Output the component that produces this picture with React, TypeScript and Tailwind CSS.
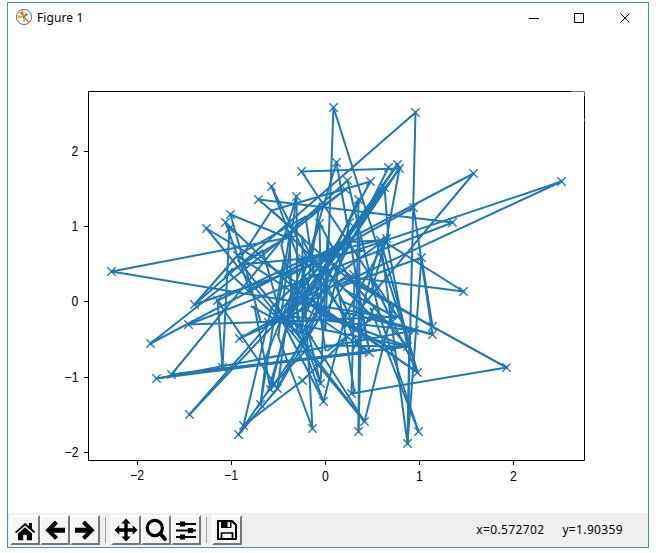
import type { ReactNode } from "react";

type Point = [number, number];
type Segment = [number, number, number, number];

const points: Point[] = [
  [333, 107], [415, 112], [336, 162], [301, 171], [388, 167], [397, 164], [399, 168],
  [473, 173], [561, 181], [347, 180], [370, 181], [271, 186], [384, 187], [258, 199],
  [296, 196], [358, 199], [345, 189], [413, 207], [452, 222], [206, 228], [230, 214],
  [225, 222], [229, 228], [111, 271], [463, 291], [421, 257], [194, 304], [188, 324],
  [150, 343], [156, 378], [171, 374], [189, 414], [238, 434], [243, 425], [222, 367],
  [239, 338], [260, 404], [270, 389], [277, 388], [302, 380], [312, 428], [323, 401],
  [320, 383], [351, 393], [358, 431], [364, 421], [407, 443], [418, 431], [417, 372],
  [407, 346], [369, 352], [361, 350], [432, 334], [432, 326], [506, 367], [414, 330],
  [289, 235], [319, 223], [349, 222], [237, 255], [228, 272], [217, 300], [386, 238],
  [380, 240], [349, 278], [394, 305], [397, 316], [373, 317], [308, 333], [241, 264],
  [353, 274], [334, 264], [282, 321], [291, 313], [345, 315], [302, 258], [268, 322],
];

const segments: Segment[] = [
  [333, 107, 325, 328], [333, 107, 417, 372],
  [415, 112, 194, 304], [415, 112, 407, 443],
  [336, 162, 268, 389], [336, 162, 369, 352],
  [301, 171, 399, 168], [301, 171, 397, 316],
  [388, 167, 277, 388], [397, 164, 302, 300], [397, 164, 321, 270], [399, 168, 291, 313],
  [399, 168, 386, 238], [399, 168, 304, 310],
  [473, 173, 150, 343], [473, 173, 345, 326],
  [561, 181, 194, 304], [561, 181, 337, 285],
  [347, 180, 282, 238], [347, 180, 380, 318], [370, 181, 271, 210], [370, 181, 300, 310],
  [345, 189, 150, 343], [345, 189, 295, 225],
  [271, 186, 308, 260], [271, 186, 325, 330], [384, 187, 388, 238], [384, 187, 282, 321],
  [258, 199, 452, 222], [258, 199, 302, 237], [296, 196, 278, 335], [296, 196, 297, 328],
  [358, 199, 302, 320], [358, 199, 356, 312], [271, 210, 241, 256],
  [271, 210, 345, 276], [413, 207, 282, 279], [413, 207, 432, 334],
  [452, 222, 188, 324], [206, 228, 308, 289], [206, 228, 364, 421],
  [230, 214, 289, 238], [230, 214, 260, 321], [225, 222, 321, 314],
  [225, 222, 249, 289], [229, 228, 222, 367], [217, 300, 222, 367],
  [111, 271, 294, 236], [111, 271, 395, 318], [463, 291, 382, 240],
  [463, 291, 345, 276], [421, 257, 340, 286], [421, 257, 407, 443], [421, 257, 432, 326],
  [194, 304, 237, 255], [188, 324, 337, 319], [156, 378, 407, 346], [156, 378, 414, 330],
  [171, 374, 407, 346], [171, 374, 285, 235], [171, 374, 369, 352],
  [189, 414, 321, 263], [189, 414, 304, 292],
  [238, 434, 270, 387], [238, 434, 277, 388], [243, 425, 302, 380], [302, 380, 345, 339],
  [243, 425, 271, 307], [270, 387, 310, 345],
  [239, 338, 305, 308], [239, 338, 345, 278], [217, 300, 277, 388],
  [217, 300, 302, 260], [260, 404, 283, 260], [260, 404, 266, 355],
  [270, 389, 254, 306], [270, 389, 308, 333], [277, 388, 321, 314],
  [312, 428, 302, 258], [312, 428, 277, 334], [323, 401, 282, 321],
  [323, 401, 345, 315], [320, 383, 327, 238], [320, 383, 308, 333],
  [351, 393, 354, 280], [351, 393, 506, 367],
  [358, 431, 359, 238], [358, 431, 361, 310], [364, 421, 282, 315],
  [364, 421, 393, 305], [418, 431, 380, 318], [418, 431, 370, 308],
  [407, 443, 409, 330], [407, 443, 380, 240], [417, 372, 380, 240],
  [417, 372, 345, 321], [417, 372, 308, 298], [407, 346, 282, 321],
  [407, 346, 349, 278], [369, 352, 308, 310], [369, 352, 361, 311],
  [361, 350, 302, 239], [432, 334, 345, 312], [432, 326, 349, 278],
  [506, 367, 345, 278], [432, 334, 373, 317],
  [386, 238, 302, 300], [380, 240, 337, 242], [386, 238, 345, 315],
  [241, 264, 315, 257], [241, 264, 302, 340], [237, 255, 305, 216],
  [289, 235, 325, 270], [319, 223, 291, 313], [305, 216, 325, 350],
  [349, 222, 327, 317], [228, 272, 262, 250], [228, 272, 282, 322],
  [302, 237, 302, 333], [345, 276, 282, 322], [337, 242, 282, 315],
  [289, 235, 292, 333], [334, 264, 302, 333],
  [296, 196, 281, 245], [281, 245, 302, 333], [289, 235, 275, 322],
  [241, 264, 289, 235], [237, 255, 330, 317], [249, 289, 334, 249],
  [302, 258, 386, 238], [319, 203, 301, 330],
  [319, 223, 321, 314], [397, 164, 312, 290], [384, 187, 335, 264],
  [271, 307, 323, 258], [268, 322, 397, 316], [282, 315, 414, 330],
  [302, 300, 394, 350], [325, 264, 354, 326], [325, 270, 373, 317],
  [334, 264, 394, 305], [291, 285, 345, 326], [277, 388, 289, 300],
  [266, 355, 305, 258], [270, 389, 296, 285], [308, 333, 364, 421],
  [302, 345, 327, 290], [352, 350, 373, 308], [380, 240, 357, 326],
  [386, 238, 407, 346], [349, 278, 308, 333], [325, 345, 407, 346],
  [251, 306, 302, 333], [315, 257, 364, 250],
  [371, 278, 417, 372], [345, 290, 394, 316], [320, 314, 407, 346],
  [291, 313, 323, 401], [334, 264, 354, 393], [302, 258, 345, 315],
  [327, 350, 373, 317], [319, 223, 349, 278], [262, 250, 282, 321],
  [298, 325, 320, 383], [386, 238, 371, 290], [340, 300, 380, 318],
];

function Plot() {
  const xTicks = [137, 231, 325, 419, 513];
  const yTicks = [452, 377, 301, 226, 151];
  const labels = ["−2", "−1", "0", "1", "2"];
  return (
    <svg className="block h-[510px] w-[640px] shrink-0" viewBox="8 3 640 510" fill="none">
      <g stroke="#1f77b4" strokeWidth="2" strokeLinecap="round">
        {segments.map(([x1, y1, x2, y2], i) => (
          <line key={i} x1={x1 + 0.5} y1={y1 + 0.5} x2={x2 + 0.5} y2={y2 + 0.5} />
        ))}
      </g>
      <path
        stroke="#1f77b4"
        strokeWidth="1.35"
        d={points.map(([x, y]) => `M${x - 3.7} ${y - 3.7}l8.4 8.4m0-8.4l-8.4 8.4`).join("")}
      />
      <g stroke="#000" strokeWidth="1">
        <path d="M571 91.5H88.5V460.5H584.5V96" />
        <path d="M571 91.5H584.5V96" stroke="#707070" />
        <path d="M584.5 119v2" stroke="#707070" />
        <path d={xTicks.map((x) => `M${x + 0.5} 461v4`).join("")} />
        <path d={yTicks.map((y) => `M84 ${y + 0.5}h4`).join("")} />
      </g>
      <g fill="#000" fontFamily="'Liberation Sans', Arial, sans-serif" fontSize="14">
        {labels.map((t, i) => (
          <text key={t} x={i < 2 ? xTicks[i] - 7 : xTicks[i] - 3} y={i < 2 ? 480 : 481}
            textLength={i < 2 ? 14 : 6.8} lengthAdjust="spacingAndGlyphs">{t}</text>
        ))}
        {labels.map((t, i) => (
          <text key={t} x={i < 2 ? 64.5 : 71.5} y={yTicks[i] + 5}
            textLength={i < 2 ? 14 : 6.8} lengthAdjust="spacingAndGlyphs">{t}</text>
        ))}
      </g>
    </svg>
  );
}

function ToolButton({ label, children }: { label: string; children: ReactNode }) {
  return (
    <button
      aria-label={label}
      className="flex size-[30px] shrink-0 items-center justify-center border-2 border-t-white border-l-white border-r-[#777] border-b-[#777] bg-[#f5f5f5]"
    >
      <svg viewBox="0 0 24 24" className="size-6 shrink-0" fill="#000" stroke="none">{children}</svg>
    </button>
  );
}

function Divider({ className }: { className: string }) {
  return <div className={`h-[26px] w-px shrink-0 bg-[#a0a0a0] ${className}`} />;
}

export default function App() {
  return (
    <div className="h-[553px] w-[656px] bg-white pt-[2px] pl-[7px] font-['Noto_Sans',sans-serif] text-black">
      <main className="relative flex h-[546px] w-[642px] flex-col border border-[#4292b6] bg-white">
        <Plot />
        <header className="absolute inset-x-0 top-0 flex h-7 items-center pl-[7px]">
          <svg className="size-[18px]" viewBox="0 0 18 18" fill="none">
            <circle cx="9" cy="9" r="7.6" fill="#fff" stroke="#666" />
            <path d="M9 1v16M1 9h16M3.5 3.5l11 11M14.5 3.5l-11 11" stroke="#ccc" strokeWidth=".5" />
            <path d="M9 9L4.5 4.8 8 3z" fill="#f06020" />
            <path d="M9 9L3 7v3.4z" fill="#e9a51e" />
            <path d="M9 9l5 5.5" stroke="#e8682a" strokeWidth="1.5" />
            <path d="M9 9l2.5-4.5M9 9v5" stroke="#91bd72" strokeWidth="1.5" />
            <path d="M8 9.5l4.5-3.5" stroke="#476b50" strokeWidth="1.2" />
          </svg>
          <h1 className="mt-[2px] ml-1 text-[12px] leading-4 tracking-[0.1px]">Figure 1</h1>
          <svg className="ml-auto h-[14px] w-[120px]" viewBox="528 9 120 14" fill="none" stroke="#000">
            <path d="M529 17.5h10M574.5 12.5h9v9h-9zM620.5 12.5l9 9M629.5 12.5l-9 9" />
          </svg>
        </header>
        <footer className="flex h-[34px] shrink-0 items-center bg-[#f0f0f0] pl-[2px]">
          <ToolButton label="Home">
            <path d="M2 14L12 5l4 3.3V5h3v5.8l3.2 3-1.2 1.2L12 7.5 3.2 15.2zM5 15.5L12 9.3l7 6.2v6.8h-5.2v-5.5h-3.6v5.5H5z" />
          </ToolButton>
          <ToolButton label="Back">
            <path d="M12 2.5l3 2.9-4.3 4.3H22v5H10.7L15 19l-3 2.8L2.4 12.2z" />
          </ToolButton>
          <ToolButton label="Forward">
            <path d="M12 2.5L9 5.4l4.3 4.3H2v5h11.3L9 19l3 2.8 9.6-9.6z" />
          </ToolButton>
          <Divider className="mr-[5px] ml-[5px]" />
          <ToolButton label="Pan">
            <path d="M12 .5l4.7 5h-3v4.8h5V7.3l4.8 4.7-4.8 4.7v-3h-5v4.8h3l-4.7 5-4.7-5h3v-4.8h-5v3L.5 12l4.8-4.7v3h5V5.5h-3z" />
          </ToolButton>
          <ToolButton label="Zoom">
            <circle cx="10.8" cy="10" r="7.6" fill="none" stroke="#000" strokeWidth="3.2" />
            <path d="M16 15.5l5 5.5" stroke="#000" strokeWidth="3.8" strokeLinecap="round" />
          </ToolButton>
          <ToolButton label="Subplots">
            <path d="M2 5h20v2H2zM2 11.5h20v2H2zM2 18h20v2H2zM6 3.5h5v5H6zM14 10h5v5h-5zM6 16.5h5v5H6z" />
          </ToolButton>
          <Divider className="mr-[5px] ml-[5px]" />
          <ToolButton label="Save">
            <path d="M3 3h14l4 4v14H3z" fill="none" stroke="#000" strokeWidth="2" strokeLinejoin="round" />
            <path d="M6 3h10.5v7H6zM12.5 4v5H15V4z" fillRule="evenodd" />
            <path d="M6.5 21v-6h11v6" fill="none" stroke="#000" strokeWidth="1.7" />
          </ToolButton>
          <div className="mr-[25px] ml-auto flex gap-[18px] text-[12px] leading-4 tracking-[0.36px]">
            <span>x=0.572702</span>
            <span>y=1.90359</span>
          </div>
        </footer>
      </main>
    </div>
  );
}
